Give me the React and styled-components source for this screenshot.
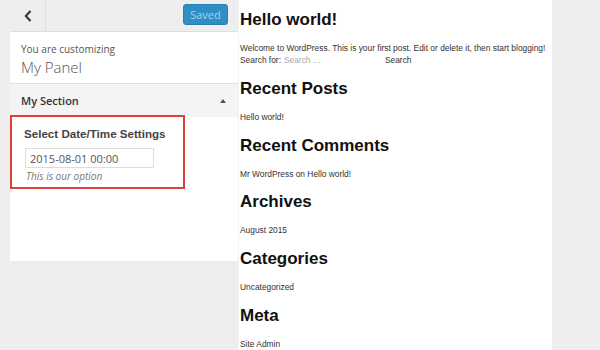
import React from "react";
import styled, { createGlobalStyle } from "styled-components";

const GlobalStyle = createGlobalStyle`
	html, body {
		margin: 0;
		padding: 0;
		background: #eeeeee;
	}
	body {
		width: 600px;
		height: 350px;
		overflow: hidden;
		font-family: "Open Sans", "Liberation Sans", sans-serif;
	}
`;

const widgets = [
	{ title: "Recent Posts", items: ["Hello world!"] },
	{ title: "Recent Comments", items: ["Mr WordPress on Hello world!"] },
	{ title: "Archives", items: ["August 2015"] },
	{ title: "Categories", items: ["Uncategorized"] },
	{ title: "Meta", items: ["Site Admin"] },
];

export default function App() {
	return (
		<>
			<GlobalStyle />
			<StyledPage>
				<StyledSidebar>
					<StyledHeader>
						<StyledBackButton aria-label="Back">
							<svg width="8" height="12" viewBox="0 0 8 12">
								<path
									d="M6.5 1 L1.8 6 L6.5 11"
									fill="none"
									stroke="#333"
									strokeWidth="2"
								/>
							</svg>
						</StyledBackButton>
						<StyledSavedButton disabled>Saved</StyledSavedButton>
					</StyledHeader>

					<StyledPanelInfo>
						<StyledCustomizing>You are customizing</StyledCustomizing>
						<StyledPanelTitle>My Panel</StyledPanelTitle>
					</StyledPanelInfo>

					<StyledSectionHeader>
						<span>My Section</span>
						<StyledArrow />
					</StyledSectionHeader>

					<StyledSectionBody>
						<StyledControl>
							<StyledControlTitle>Select Date/Time Settings</StyledControlTitle>
							<StyledDateInput defaultValue="2015-08-01 00:00" />
							<StyledDescription>This is our option</StyledDescription>
						</StyledControl>
					</StyledSectionBody>
				</StyledSidebar>

				<StyledPreview>
					<StyledWidget>
						<StyledHeading>Hello world!</StyledHeading>
						<StyledText>
							Welcome to WordPress. This is your first post. Edit or delete it,
							then start blogging!
						</StyledText>
						<StyledSearchRow>
							Search for:
							<StyledSearchInput placeholder="Search …" />
							<span>Search</span>
						</StyledSearchRow>
					</StyledWidget>
					{widgets.map((w) => (
						<StyledWidget key={w.title}>
							<StyledHeading>{w.title}</StyledHeading>
							{w.items.map((item) => (
								<StyledText key={item}>{item}</StyledText>
							))}
						</StyledWidget>
					))}
				</StyledPreview>
			</StyledPage>
		</>
	);
}

const StyledPage = styled.div`
	display: flex;
	height: 350px;
	padding-left: 10px;
	background: #eeeeee;
`;

const StyledSidebar = styled.aside`
	width: 228px;
	display: flex;
	flex-direction: column;
	align-self: flex-start;
`;

const StyledHeader = styled.header`
	height: 31px;
	display: flex;
	align-items: flex-start;
	justify-content: space-between;
	background: #eeeeee;
	border-bottom: 1px solid #dddddd;
`;

const StyledBackButton = styled.button`
	width: 36px;
	height: 31px;
	display: flex;
	align-items: center;
	justify-content: center;
	padding: 0;
	margin: 0;
	background: transparent;
	border: none;
	border-right: 1px solid #dddddd;
	cursor: pointer;
`;

const StyledSavedButton = styled.button`
	width: 45px;
	height: 21px;
	margin: 4px 10px 0 0;
	padding: 0;
	background: #2f8fc4;
	border: 1px solid #2a80b3;
	border-radius: 3px;
	color: #a6d1ea;
	font-family: "Open Sans", sans-serif;
	font-size: 11px;
	line-height: 19px;
`;

const StyledPanelInfo = styled.div`
	background: #ffffff;
	padding: 10px 11px 6px;
	border-bottom: 1px solid #dddddd;
	height: 35px;
`;

const StyledCustomizing = styled.div`
	font-size: 10px;
	line-height: 14px;
	color: #555555;
`;

const StyledPanelTitle = styled.div`
	margin-top: 1px;
	font-size: 15px;
	line-height: 20px;
	font-weight: 300;
	color: #555555;
`;

const StyledSectionHeader = styled.div`
	height: 33px;
	display: flex;
	align-items: center;
	justify-content: space-between;
	padding: 0 12px 0 11px;
	background: #f4f4f4;
	font-size: 11px;
	font-weight: 600;
	color: #333333;
`;

const StyledArrow = styled.span`
	width: 0;
	height: 0;
	border-left: 3px solid transparent;
	border-right: 3px solid transparent;
	border-bottom: 4px solid #555555;
`;

const StyledSectionBody = styled.div`
	height: 144px;
	background: #ffffff;
`;

const StyledControl = styled.div`
	width: 175px;
	margin-top: -2px;
	padding: 9px 0 5px 12px;
	border: 2px solid #e0403a;
	box-sizing: border-box;
`;

const StyledControlTitle = styled.div`
	font-family: "Liberation Sans", Arial, sans-serif;
	font-size: 11.6px;
	line-height: 16px;
	font-weight: 700;
	color: #444444;
`;

const StyledDateInput = styled.input`
	display: block;
	box-sizing: border-box;
	width: 129px;
	height: 20px;
	margin: 6px 0 0 1px;
	padding: 0 4px;
	border: 1px solid #dddddd;
	font-family: "Open Sans", sans-serif;
	font-size: 11px;
	color: #555555;
	outline: none;
`;

const StyledDescription = styled.div`
	margin: 2px 0 0 2px;
	font-size: 10px;
	line-height: 12px;
	font-style: italic;
	color: #777777;
`;

const StyledPreview = styled.main`
	width: 312px;
	padding: 10px 0 0 1px;
	background: #ffffff;
	border-left: 1px solid #f2f2f2;
	font-family: "Liberation Sans", Arial, sans-serif;
	color: #222222;
	overflow: hidden;
`;

const StyledWidget = styled.section`
	margin-bottom: 12.75px;
`;

const StyledHeading = styled.h2`
	margin: 0 0 12px;
	font-size: 17px;
	line-height: 20px;
	font-weight: 700;
	color: #111111;
`;

const StyledText = styled.p`
	margin: 0;
	font-size: 8.4px;
	line-height: 12px;
	white-space: nowrap;
	color: #333333;
`;

const StyledSearchRow = styled.form`
	display: flex;
	align-items: center;
	height: 12px;
	font-size: 8.4px;
	color: #333333;
`;

const StyledSearchInput = styled.input`
	width: 101px;
	margin: 0 0 0 3px;
	padding: 0;
	border: none;
	font-family: "Liberation Sans", Arial, sans-serif;
	font-size: 8.4px;
	color: #333333;
	outline: none;
	&::placeholder {
		color: #aaaaaa;
	}
`;
